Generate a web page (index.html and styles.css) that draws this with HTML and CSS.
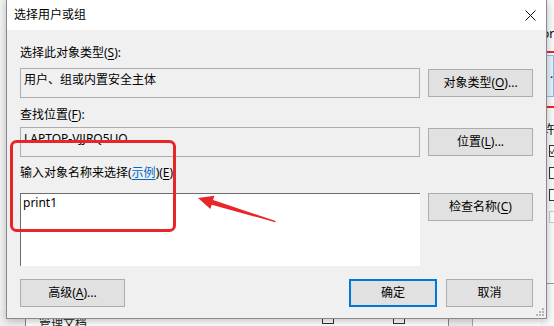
FILE: index.html
```html
<!DOCTYPE html>
<html lang="zh-CN">
<head>
    <meta charset="UTF-8">
    <meta name="viewport" content="width=device-width, initial-scale=1.0">
    <title>选择用户或组</title>
    <link rel="stylesheet" href="styles.css">
</head>
<body>
<div class="desktop">
    <!-- window behind the dialog, only its edges show -->
    <div class="side">
        <div class="side-word">or</div>
        <div class="side-red"></div>
        <div class="side-select">.</div>
        <div class="side-red"></div>
        <div class="side-word side-perm">许</div>
        <div class="side-check on">&#10003;</div>
        <div class="side-check"></div>
        <div class="side-check"></div>
        <div class="side-check dim"></div>
        <div class="side-rule"></div>
    </div>
    <div class="perm-row">
        <span class="perm-name">管理文档</span>
        <span class="perm-box"></span>
        <span class="perm-box second"></span>
        <span class="perm-scroll"></span>
    </div>

    <div class="dialog">
        <div class="titlebar">
            <span class="title">选择用户或组</span>
            <svg class="close" width="11" height="11" viewBox="0 0 11 11">
                <path d="M0.5 0.5 L10.5 10.5 M10.5 0.5 L0.5 10.5" stroke="#111" stroke-width="1" fill="none"/>
            </svg>
        </div>
        <div class="content">
            <div class="label label-type">选择此对象类型(<u>S</u>):</div>
            <div class="row row-type">
                <div class="field">用户、组或内置安全主体</div>
                <button class="btn">对象类型(<u>O</u>)...</button>
            </div>

            <div class="label label-loc">查找位置(<u>F</u>):</div>
            <div class="row row-loc">
                <div class="field">LAPTOP-VJJRQ5UO</div>
                <button class="btn">位置(<u>L</u>)...</button>
            </div>

            <div class="label label-name">输入对象名称来选择(<a class="link">示例</a>)(<u>E</u>):</div>
            <div class="row row-name">
                <div class="names">print1</div>
                <button class="btn btn-top">检查名称(<u>C</u>)</button>
            </div>

            <div class="actions">
                <button class="btn btn-adv">高级(<u>A</u>)...</button>
                <button class="btn btn-ok">确定</button>
                <button class="btn btn-cancel">取消</button>
            </div>
        </div>
        <svg class="grip" width="8" height="8" viewBox="0 0 8 8">
            <rect x="6" y="0" width="2" height="2" fill="#b4b4b4"/>
            <rect x="3" y="3" width="2" height="2" fill="#b4b4b4"/>
            <rect x="6" y="3" width="2" height="2" fill="#b4b4b4"/>
            <rect x="0" y="6" width="2" height="2" fill="#b4b4b4"/>
            <rect x="3" y="6" width="2" height="2" fill="#b4b4b4"/>
            <rect x="6" y="6" width="2" height="2" fill="#b4b4b4"/>
        </svg>
    </div>

    <!-- red annotation drawn over the screenshot -->
    <svg class="marks" width="554" height="326" viewBox="0 0 554 326">
        <rect x="11.5" y="141.5" width="163" height="89" rx="5" fill="none" stroke="#e8262a" stroke-width="3"/>
        <polygon fill="#e8262a" points="198,198 214.4,195.7 213.1,200 275.7,221 275.3,222.2 211.7,204.8 210.4,209.1"/>
    </svg>
</div>
</body>
</html>
```

FILE: styles.css
```css
* { box-sizing: border-box; }
body { margin: 0; font-family: "Noto Sans", "Noto Sans CJK SC", sans-serif; font-size: 12px; color: #000; }
u { text-decoration: underline; text-underline-offset: 2px; }

.desktop { position: relative; width: 554px; height: 326px; overflow: hidden; background: #f4f4f4; }

/* background window pieces */
.side { position: absolute; left: 540px; top: 0; width: 14px; height: 326px; background: #fafafa; }
.side-word { margin-top: 26px; padding-left: 2px; line-height: 16px; }
.side-perm { margin-top: 14px; padding-left: 3px; }
.side-red { height: 2px; margin-top: 9px; background: #e8262a; }
.side-select { margin-top: 2px; height: 42px; padding-left: 9px; line-height: 36px; background: #e5f1fb; border: 1px solid #8cbce8; }
.side-check { width: 12px; height: 12px; margin: 7px 0 0 9px; border: 1px solid #333; background: #fff; font-size: 9px; line-height: 10px; }
.side-check + .side-check { margin-top: 10px; }
.side-check.dim { border-color: #c8c8c8; }
.side-rule { margin-top: 60px; height: 1px; background: #999; }

.perm-row { position: absolute; left: 0; top: 310px; width: 540px; height: 16px; display: flex; background: #fff; border-left: 25px solid #f0f0f0; }
.perm-row::before { content: ""; width: 1px; background: #888; }
.perm-name { margin: 6px 0 0 13px; line-height: 16px; color: #222; }
.perm-box { width: 12px; height: 13px; margin: 1px 0 0 235px; border: 1px solid #333; }
.perm-box.second { margin-left: 59px; }
.perm-scroll { width: 25px; margin-left: 43px; border-left: 1px solid #888; border-right: 1px solid #aaa; background: #f0f0f0; }

/* dialog */
.dialog { position: absolute; left: 6px; top: -1px; width: 541px; height: 320px; background: #f0f0f0; border: 1px solid #8a8a8a; box-shadow: 0 2px 8px rgba(0, 0, 0, 0.25); }
.titlebar { height: 30px; display: flex; align-items: center; justify-content: space-between; padding: 0 10px 0 7px; background: #fff; }
.title { line-height: 16px; }

.content { padding: 0 13px; }
.label { line-height: 16px; }
.label-type { margin-top: 15px; }
.label-loc { margin-top: 9px; }
.label-name { margin-top: 8px; }
.link { color: #0066cc; text-decoration: underline; text-underline-offset: 2px; }

.row { display: grid; grid-template-columns: 400px 105px; column-gap: 8px; align-items: center; }
.row-type { margin-top: 7px; }
.row-loc { margin-top: 4px; }
.row-name { margin-top: 12px; align-items: start; }

.field { height: 30px; padding: 3px 3px 0; line-height: 16px; border: 1px solid #adadad; background: #f0f0f0; }
.names { height: 73px; padding: 1px 2px 0; line-height: 16px; background: #fff; border-top: 1px solid #6d6d6d; border-left: 1px solid #6d6d6d; }

.btn { height: 28px; padding: 0; font: inherit; color: #000; line-height: 16px; background: #e1e1e1; border: 1px solid #adadad; }

.actions { display: flex; margin-top: 13px; }
.btn-adv { width: 105px; margin-right: auto; }
.btn-ok { width: 88px; border: 2px solid #0078d7; }
.btn-cancel { width: 87px; margin-left: 9px; }

.grip { position: absolute; right: 2px; bottom: 2px; }

.marks { position: absolute; left: 0; top: 0; }
```
